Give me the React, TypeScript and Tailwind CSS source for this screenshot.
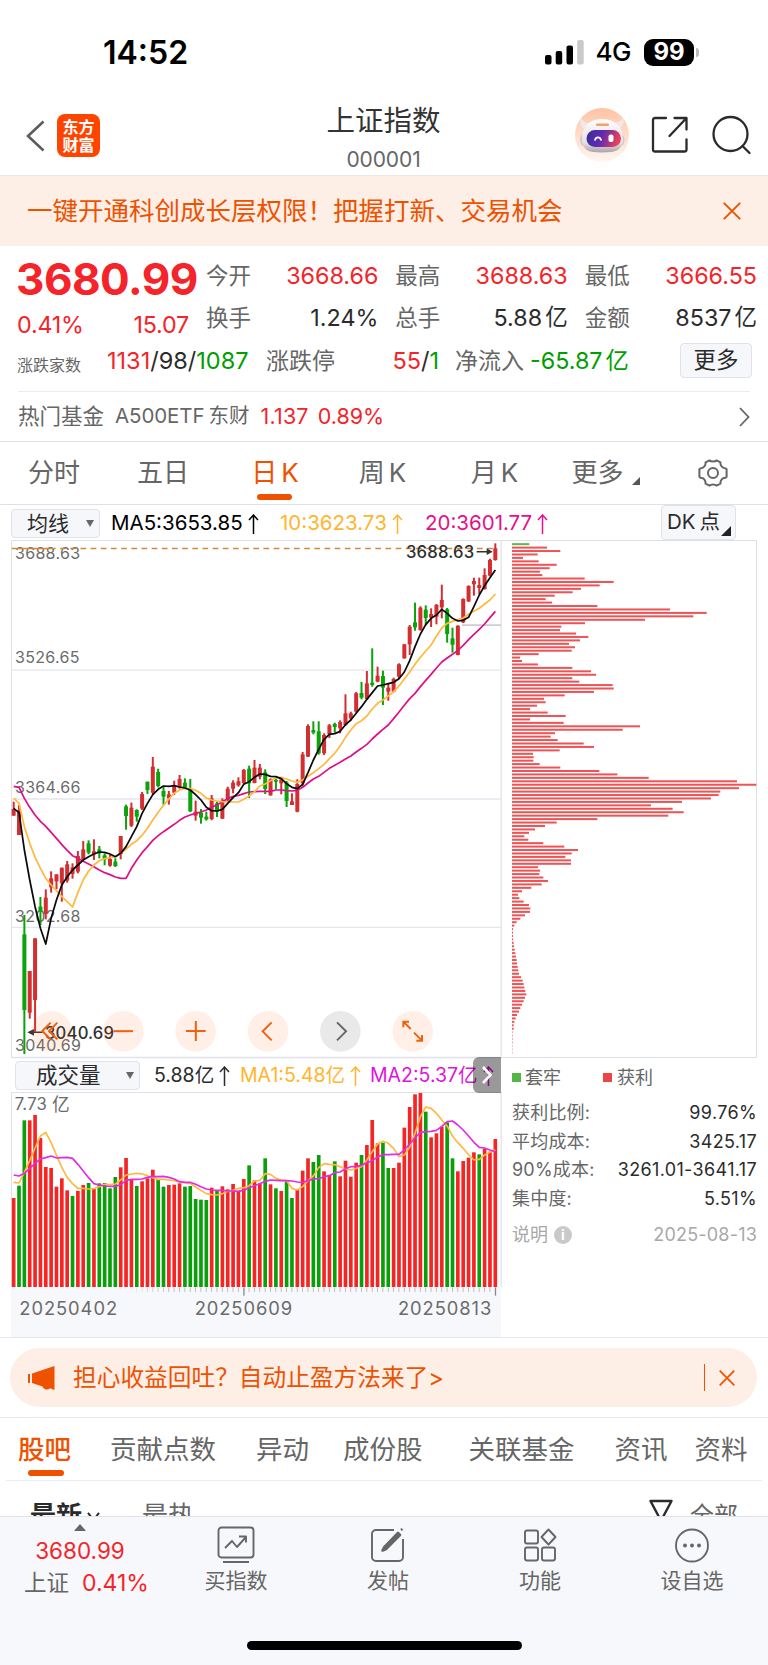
import React from "react";
import { clsx } from "clsx";

type Candle = [high: number, top: number, bottom: number, low: number];

// Chart drawings use a grid of 3 units per pixel
const STEP = 16.055;
const FIRST_X = 41;
const barX = (i: number) => FIRST_X + i * STEP;

const DOWN_CANDLES = new Set([2, 5, 14, 16, 17, 19, 21, 23, 25, 27, 28, 32, 33, 35, 36, 38, 44, 47, 49, 51, 56, 57, 60, 65, 67, 69, 75, 77, 81, 82]);
const DOWN_VOLUMES = new Set([1, 2, 11, 14, 16, 17, 18, 19, 23, 27, 28, 32, 33, 34, 35, 36, 38, 44, 47, 49, 51, 52, 56, 57, 60, 65, 69, 70, 77, 81, 82, 87]);

const CANDLES: Candle[] = [
    [905, 927, 947, 947], [915, 930, 1005, 1005], [1245, 1303, 1530, 1662], [1413, 1413, 1538, 1556], [1315, 1315, 1500, 1595],
    [1191, 1220, 1235, 1275], [1168, 1193, 1242, 1258], [1114, 1135, 1162, 1178], [1123, 1123, 1144, 1167], [1103, 1103, 1150, 1205],
    [1083, 1093, 1142, 1148], [1090, 1102, 1122, 1136], [1053, 1068, 1115, 1120], [1023, 1048, 1077, 1080], [1021, 1030, 1058, 1063],
    [1018, 1054, 1063, 1080], [1038, 1048, 1060, 1075], [1060, 1066, 1078, 1096], [1065, 1077, 1097, 1100], [1075, 1085, 1098, 1101],
    [1008, 1008, 1062, 1078], [914, 919, 948, 989], [908, 923, 977, 981], [928, 930, 950, 965], [876, 882, 926, 930],
    [845, 845, 870, 882], [771, 800, 878, 885], [806, 816, 858, 862], [860, 873, 890, 914], [873, 883, 895, 914],
    [842, 855, 878, 885], [825, 837, 862, 866], [835, 848, 863, 866], [837, 870, 934, 936], [902, 935, 947, 962],
    [927, 938, 953, 971], [935, 950, 958, 962], [885, 895, 957, 961], [905, 910, 935, 951], [895, 902, 956, 957],
    [860, 866, 900, 905], [841, 848, 866, 880], [832, 844, 856, 860], [807, 810, 849, 852], [797, 806, 850, 894],
    [780, 803, 849, 850], [792, 803, 830, 838], [808, 817, 867, 882], [835, 838, 886, 887], [835, 840, 845, 868],
    [833, 838, 850, 883], [843, 848, 903, 921], [880, 904, 915, 915], [838, 852, 935, 937], [756, 763, 850, 860],
    [673, 678, 770, 771], [664, 690, 698, 703], [664, 694, 760, 764], [700, 705, 760, 765], [672, 676, 703, 714],
    [668, 672, 681, 698], [661, 666, 685, 700], [583, 640, 675, 678], [635, 640, 655, 662], [576, 580, 635, 638],
    [546, 579, 593, 598], [513, 550, 597, 599], [445, 548, 555, 560], [500, 527, 545, 547], [512, 528, 563, 615],
    [550, 563, 575, 602], [533, 537, 575, 577], [490, 493, 530, 536], [432, 433, 475, 476], [375, 380, 433, 465],
    [308, 367, 382, 392], [319, 323, 390, 392], [316, 329, 354, 376], [325, 342, 353, 381], [312, 315, 350, 373],
    [254, 300, 322, 355], [324, 328, 402, 428], [383, 415, 434, 458], [376, 377, 465, 466], [295, 297, 367, 369],
    [256, 258, 304, 306], [233, 243, 253, 287], [233, 255, 264, 282], [205, 225, 267, 269], [176, 180, 227, 229],
    [130, 145, 180, 182],
];

const MA5 = [
    925, 938, 1050, 1140, 1220, 1285, 1332, 1255, 1200, 1155, 1130, 1110, 1095, 1080, 1070, 1062, 1056, 1057, 1062, 1070, 1060, 1040, 1010,
    980, 940, 910, 884, 868, 858, 859, 857, 861, 864, 870, 884, 900, 922, 932, 933, 928, 910, 893, 878, 853, 845, 832, 822, 823, 829, 830,
    836, 851, 862, 866, 853, 818, 780, 748, 718, 703, 701, 694, 674, 660, 640, 620, 598, 578, 558, 555, 551, 547, 536, 516, 482, 440, 402,
    374, 355, 345, 328, 340, 355, 363, 361, 352, 320, 285, 257, 233, 210,
];
const MA10 = [
    894, 910, 980, 1030, 1072, 1105, 1135, 1155, 1172, 1190, 1205, 1221, 1177, 1140, 1113, 1095, 1082, 1076, 1073, 1070, 1060, 1047, 1033,
    1022, 1006, 985, 960, 937, 916, 897, 880, 870, 865, 866, 871, 880, 894, 900, 903, 905, 906, 906, 906, 898, 888, 875, 858, 852, 842, 834,
    832, 837, 843, 847, 840, 829, 818, 806, 793, 776, 760, 738, 712, 690, 671, 662, 648, 627, 610, 600, 588, 575, 558, 537, 516, 493, 472,
    453, 435, 408, 384, 370, 364, 359, 354, 343, 334, 325, 312, 300, 282,
];
const MA20 = [
    859, 862, 895, 922, 945, 964, 979, 997, 1015, 1034, 1051, 1067, 1075, 1084, 1092, 1100, 1110, 1118, 1124, 1131, 1135, 1135, 1105, 1080,
    1058, 1040, 1021, 1007, 995, 984, 973, 961, 951, 945, 940, 936, 930, 922, 914, 905, 896, 889, 886, 881, 876, 875, 874, 874, 874, 870,
    870, 872, 873, 871, 862, 849, 837, 829, 817, 805, 796, 787, 777, 768, 756, 745, 733, 717, 702, 688, 675, 656, 636, 616, 596, 580, 560,
    541, 523, 504, 486, 474, 463, 451, 436, 419, 403, 388, 372, 353, 334,
];

const VOLUMES = [
    564, 527, 331, 331, 315, 384, 471, 474, 530, 505, 541, 558, 543, 525, 519, 534, 520, 519, 535, 501, 472, 444, 508, 528, 514, 505, 479,
    510, 530, 525, 524, 520, 530, 528, 567, 569, 570, 533, 541, 529, 538, 522, 542, 507, 466, 511, 520, 445, 523, 535, 543, 514, 564, 540,
    482, 445, 456, 435, 484, 497, 454, 499, 452, 500, 458, 435, 405, 330, 400, 398, 474, 474, 458, 353, 291, 253, 249, 305, 382, 370, 350,
    337, 445, 484, 453, 443, 427, 433, 416, 425, 387,
];
const VOL_MA1 = [
    517, 519, 487, 452, 414, 378, 367, 398, 435, 472, 503, 521, 535, 535, 537, 536, 530, 523, 524, 522, 510, 495, 492, 490, 492, 497, 503,
    508, 508, 510, 512, 516, 518, 520, 531, 541, 551, 554, 555, 551, 544, 541, 535, 533, 527, 513, 511, 491, 493, 505, 510, 512, 535, 540,
    530, 512, 498, 473, 461, 463, 464, 470, 477, 480, 475, 470, 450, 425, 402, 394, 400, 415, 440, 435, 411, 370, 320, 291, 295, 310, 330,
    348, 378, 398, 415, 434, 450, 448, 435, 427, 420,
];
const VOL_MA2 = [
    495, 498, 490, 475, 460, 447, 443, 438, 444, 443, 442, 445, 463, 483, 503, 521, 525, 528, 529, 529, 524, 511, 508, 508, 507, 502, 499,
    500, 499, 502, 507, 515, 517, 517, 523, 530, 537, 540, 541, 541, 543, 543, 544, 541, 533, 527, 521, 514, 510, 511, 512, 512, 513, 516,
    517, 512, 507, 506, 500, 497, 488, 486, 476, 470, 470, 466, 458, 452, 441, 434, 434, 433, 433, 420, 402, 383, 368, 365, 364, 361, 349,
    335, 333, 345, 360, 378, 397, 412, 414, 420, 425,
];

// Right edge of each cost-distribution bar, top to bottom
const CHIPS = [
    88, 141, 181, 113, 69, 116, 170, 149, 120, 127, 254, 341, 299, 243, 218, 164, 137, 156, 292, 510, 620, 580, 435, 255, 184, 180, 228, 265,
    240, 207, 225, 215, 116, 60, 66, 114, 217, 273, 288, 217, 238, 338, 341, 282, 194, 132, 137, 111, 90, 143, 197, 90, 191, 420, 368, 165,
    152, 173, 251, 282, 179, 99, 101, 100, 119, 181, 298, 352, 446, 711, 769, 717, 661, 656, 633, 546, 453, 518, 551, 505, 292, 170, 135,
    105, 87, 73, 85, 130, 193, 234, 215, 196, 213, 213, 114, 120, 118, 130, 144, 125, 94, 66, 54, 58, 71, 87, 91, 90, 75, 61, 50, 43, 39, 39,
    39, 39, 41, 42, 44, 46, 48, 50, 51, 53, 55, 57, 63, 68, 71, 73, 76, 79, 75, 71, 66, 61, 57, 51, 47, 43, 41, 41, 39, 39, 39, 39, 38, 38, 38,
];

const toPoints = (ys: number[]) => ys.map((y, i) => `${barX(i).toFixed(1)},${y}`).join(" ");

const StatusBar = () => (
    <div className="flex h-[100px] items-center justify-between pl-[103px] pr-[69px] pt-[5px] text-black">
        <span className="text-[32px] leading-none font-semibold">14:52</span>
        <div className="flex items-center pb-[1px]">
            <svg width="39" height="25" viewBox="0 0 39 25">
                <rect x="0" y="15" width="6.5" height="9.5" rx="2" />
                <rect x="10.7" y="11" width="6.5" height="13.5" rx="2" />
                <rect x="21.5" y="5.5" width="6.5" height="19" rx="2" />
                <rect x="32.2" y="0" width="6.5" height="24.5" rx="2" fill="#c9c9c9" />
            </svg>
            <span className="ml-[12px] text-[26px] leading-none font-medium tracking-[-0.5px]">4G</span>
            <div className="ml-[13px] flex h-[27px] w-[50px] items-center justify-center rounded-[9px] bg-black text-[24px] leading-none font-bold text-white">99</div>
            <div className="ml-[2px] h-[9px] w-[3px] rounded-r-full bg-[#bbb]" />
        </div>
    </div>
);

const Robot = () => (
    <svg width="54" height="54" viewBox="0 0 54 54">
        <defs>
            <linearGradient id="halo" x1="0" y1="0" x2="0" y2="1">
                <stop offset="0" stopColor="#ffc3a4" />
                <stop offset="1" stopColor="#fff6f1" />
            </linearGradient>
            <linearGradient id="shell" x1="0" y1="0" x2="0" y2="1">
                <stop offset="0" stopColor="#fdfcfc" />
                <stop offset="0.7" stopColor="#e6e2e3" />
                <stop offset="1" stopColor="#aaa4ab" />
            </linearGradient>
            <linearGradient id="visor" x1="0" y1="0" x2="1" y2="0.2">
                <stop offset="0" stopColor="#3a2c98" />
                <stop offset="0.5" stopColor="#5f2bb0" />
                <stop offset="1" stopColor="#e8405a" />
            </linearGradient>
        </defs>
        <circle cx="27" cy="27" r="27" fill="url(#halo)" />
        <path d="M6 10c-2 5 0 9 4 11l6-6c-5 0-8.500-1-10-5zM48 9.500c2 5 0 9-4 11l-6-6c5 0 8.500-1 10-5z" fill="#efe9e9" />
        <ellipse cx="8.500" cy="32" rx="3.500" ry="6" fill="#cfc9cd" />
        <ellipse cx="46" cy="32" rx="3.500" ry="6" fill="#cfc9cd" />
        <path d="M27 11c14 0 21 9 21 20s-7 13.500-21 13.500S7 42 7 31s6-20 20-20z" fill="url(#shell)" />
        <rect x="21" y="15.500" width="13" height="2.500" rx="1.200" fill="#eda36c" />
        <rect x="11.500" y="22" width="34.500" height="17" rx="8.500" fill="url(#visor)" />
        <path d="M20 32c1-3.500 5-3.500 6 0" fill="none" stroke="#fff" strokeWidth="1.700" strokeLinecap="round" />
        <rect x="33.500" y="26.500" width="5" height="7.500" rx="2" fill="#fff" />
    </svg>
);

const Header = () => (
    <div className="flex h-[76px] items-center border-b border-[#e8eaee] pl-[26px]">
        <div className="flex w-[300px] items-center pb-1">
            <svg width="19" height="32" viewBox="0 0 19 32" fill="none" stroke="#5c5c5c" strokeWidth="2.600">
                <path d="M17.500 1.500 2 16l15.500 14.500" />
            </svg>
            <div className="ml-[12px] flex h-[43px] w-[43px] flex-col items-center justify-center rounded-[8px] bg-[#ff4400] text-[16px] leading-[18px] font-bold text-white">
                <span>东方</span>
                <span>财富</span>
            </div>
        </div>
        <div className="flex w-[115px] flex-col items-center">
            <h1 className="text-[28.500px] leading-[40px] whitespace-nowrap text-[#333]">上证指数</h1>
            <span className="pt-[4px] text-[21px] leading-[30px] tracking-[-0.1px] text-[#666]">000001</span>
        </div>
        <div className="flex items-center pb-[6px] pl-[134px]">
            <Robot />
            <svg className="ml-[22px]" width="38" height="38" viewBox="0 0 38 38" fill="none" stroke="#2b2b2b" strokeWidth="2.300" strokeLinecap="round" strokeLinejoin="round">
                <path d="M15 2H4a2 2 0 0 0-2 2v29.500a2 2 0 0 0 2 2h29.500a2 2 0 0 0 2-2V23.500M23.500 2h12v11.500M35 2.500 18.500 20" />
            </svg>
            <svg className="ml-[23px]" width="40" height="40" viewBox="0 0 40 40" fill="none" stroke="#2b2b2b" strokeWidth="2.300" strokeLinecap="round">
                <circle cx="18.500" cy="19" r="17" />
                <path d="m30.500 31 7 7" />
            </svg>
        </div>
    </div>
);

const CloseIcon = ({ size }: { size: number }) => (
    <svg width={size} height={size} viewBox="0 0 18 18" fill="none" stroke="#ee5200" strokeWidth="1.900">
        <path d="m.8.8 16.400 16.400M17.200.8.8 17.200" />
    </svg>
);

const QuoteCell = ({ label, value, unit, up }: { label: string; value: string; unit?: string; up?: boolean }) => (
    <div className="flex h-[42px] items-center justify-between whitespace-nowrap">
        <span className="text-[#666]">{label}</span>
        <span className={clsx("flex gap-[3px] text-[23.300px]", up ? "text-[#f5232a]" : "text-[#2b2b2b]")}>
            {value}
            {unit && <span className="text-[22.500px]">{unit}</span>}
        </span>
    </div>
);

const Quote = () => (
    <section className="h-[195px] text-[22.500px] leading-none">
        <div className="flex h-[93px] pl-[17px] pr-[11px]">
            <div className="w-[189px] text-[#f5232a]">
                <div className="-ml-[1px] flex h-[66px] items-center text-[44px] font-bold tracking-[-0.500px]">3680.99</div>
                <div className="flex h-[26px] w-[172px] items-center justify-between text-[23.300px] tracking-[-0.2px]">
                    <span>0.41%</span>
                    <span>15.07</span>
                </div>
            </div>
            <div className="grid flex-1 grid-cols-3 content-start gap-x-[17px] pt-[9px]">
                <QuoteCell label="今开" value="3668.66" up />
                <QuoteCell label="最高" value="3688.63" up />
                <QuoteCell label="最低" value="3666.55" up />
                <QuoteCell label="换手" value="1.24%" />
                <QuoteCell label="总手" value="5.88" unit="亿" />
                <QuoteCell label="金额" value="8537" unit="亿" />
            </div>
        </div>
        <div className="flex h-[44px] items-center pl-[17px] text-[23.500px] whitespace-nowrap text-[#2b2b2b]">
            <span className="w-[90px] pt-[8px] text-[16px] text-[#666]">涨跌家数</span>
            <span className="w-[159px]"><b className="font-normal text-[#f5232a]">1131</b>/98/<b className="font-normal text-[#009e00]">1087</b></span>
            <span className="w-[70px] text-[23px] text-[#666]">涨跌停</span>
            <span className="w-[103px] text-right"><b className="font-normal text-[#f5232a]">55</b>/<b className="font-normal text-[#009e00]">1</b></span>
            <span className="ml-[16px] w-[75px] text-[23px] text-[#666]">净流入</span>
            <span className="flex w-[150px] gap-[3px] text-[23.300px] text-[#009e00]">-65.87<span>亿</span></span>
            <button className="-mt-[2px] h-[35px] w-[72px] rounded-[4px] border border-[#dfe2e8] bg-[#f6f7fa] text-[22.500px]">更多</button>
        </div>
        <div className="mx-[18px] mt-[8px] border-t border-[#ececf0]" />
        <div className="flex h-[49px] items-center pr-[18px] pl-[18px] text-[21.500px] text-[#666]">
            <span>热门基金</span>
            <span className="ml-[11px] text-[20.500px] tracking-[-0.1px]">A500ETF</span>
            <span className="ml-[4px] text-[20.500px]">东财</span>
            <span className="ml-[11px] text-[21.500px] tracking-[0.2px] text-[#f5232a]">1.137</span>
            <span className="ml-[9px] text-[21.500px] text-[#f5232a]">0.89%</span>
            <svg className="ml-auto" width="11" height="20" viewBox="0 0 11 20" fill="none" stroke="#666" strokeWidth="1.800">
                <path d="m1 1 8.500 9L1 19" />
            </svg>
        </div>
    </section>
);

const PeriodTabs = () => (
    <nav className="grid h-[64px] grid-cols-[108px_110px_114px_101px_123px_83px_129px] border-y border-[#dfe1e7] pb-[1px] text-[26px] leading-none text-[#666]">
        <span className="flex items-center justify-center">分时</span>
        <span className="flex items-center justify-center">五日</span>
        <span className="relative flex items-center justify-center gap-[4px] text-[#ee5200]">
            日<span>K</span>
            <i className="absolute bottom-[3px] left-[39px] h-[6px] w-[35px] rounded-full bg-[#ee5200]" />
        </span>
        <span className="flex items-center justify-center gap-[4px]">周<span>K</span></span>
        <span className="flex items-center justify-center gap-[4px]">月<span>K</span></span>
        <span className="relative flex items-center justify-center">
            更多
            <i className="absolute -right-[1px] bottom-[18px] border-b-[8px] border-l-[8px] border-b-[#555] border-l-transparent" />
        </span>
        <span className="flex items-center pl-[59px]">
            <svg width="30" height="30" viewBox="0 0 30 30" fill="none" stroke="#666" strokeWidth="2" strokeLinejoin="round">
                <path d="M11.500 2.300c1.200 1.600 5.800 1.600 7 0l4 2c-.6 2.200 1.200 5.300 3.500 5.600q1.600 0 2.600 1.300v7.600q-1 1.300-2.600 1.300c-2.300.3-4.100 3.400-3.500 5.600l-4 2c-1.200-1.600-5.800-1.600-7 0l-4-2c.6-2.200-1.200-5.300-3.500-5.600q-1.600 0-2.600-1.300v-7.600q1-1.300 2.600-1.300c2.300-.3 4.100-3.400 3.500-5.600z" />
                <circle cx="15" cy="15" r="5" />
            </svg>
        </span>
    </nav>
);

const UpArrow = () => (
    <svg className="mx-[5px] inline-block shrink-0" width="11" height="20" viewBox="0 0 11 20" fill="none" stroke="currentColor" strokeWidth="1.500">
        <path d="M5.500 20V1M1 6l4.500-5L10 6" />
    </svg>
);

const MovingAverageBar = () => (
    <div className="flex h-[35px] items-center pl-[11px] text-[20.500px] leading-none whitespace-nowrap">
        <button className="mt-[1px] flex h-[29px] w-[89px] items-center justify-between rounded-[4px] border border-[#dfe2e8] bg-[#f6f7fa] pr-[5px] pl-[15px] text-[21px] text-[#2b2b2b]">
            均线
            <i className="border-x-[4px] border-t-[7px] border-x-transparent border-t-[#666]" />
        </button>
        <span className="ml-[11px] flex w-[169px] items-center pt-[2px] text-black">MA5:3653.85<UpArrow /></span>
        <span className="flex w-[145px] items-center pt-[2px] text-[#ffb52e]">10:3623.73<UpArrow /></span>
        <span className="flex w-[236px] items-center pt-[2px] text-[#e5108a]">20:3601.77<UpArrow /></span>
        <button className="relative flex h-[35px] w-[75px] items-center gap-[4px] rounded-[4px] border border-[#dfe2e8] bg-[#f6f7fa] pl-[5px] text-[#2b2b2b]">
            DK<span>点</span>
            <i className="absolute right-[4px] bottom-[3px] border-b-[10px] border-l-[10px] border-b-[#222] border-l-transparent" />
        </button>
    </div>
);

const CIRCLES = [
    { cx: 155, icon: "M152 1568l-25 25 25 25M172 1568l-25 25 25 25" },
    { cx: 370, icon: "M340 1593.500h59" },
    { cx: 587, icon: "M558 1593h59M587.500 1563v60" },
    { cx: 804, icon: "M815 1567l-27 27 27 27" },
    { cx: 1021, icon: "M1011 1567l27 27-27 27" },
    { cx: 1238, icon: "M1210 1582v-17h17M1210 1565l22 22M1266 1605v17h-17M1266 1622l-24-24" },
];

const PriceChart = () => (
    <svg className="block shrink-0" width="491" height="519" viewBox="33 120 1473 1557" fontFamily="Inter, sans-serif">
        <path d="M34.500 1674V121.500H1503" fill="none" stroke="#dfe1e8" strokeWidth="3" />
        <path d="M33 1672.500H1503M1503.500 120V1674" stroke="#e2e3ea" strokeWidth="4" />
        <path d="M35 510.500H1503M35 897H1503M35 1282H1503" stroke="#e4e6ee" strokeWidth="4" />
        <path d="M1386 375.500H1503" stroke="#cccdd6" strokeWidth="5" />
        <g fill="#6b6b6b" fontSize="48" letterSpacing="0.9">
            <text x="45" y="178">3688.63</text>
            <text x="45" y="490">3526.65</text>
            <text x="45" y="879">3364.66</text>
            <text x="45" y="1266">3202.68</text>
            <text x="45" y="1653">3040.69</text>
        </g>
        <path d="M35 145.500H150" stroke="#d08a3f" strokeWidth="4" />
        <path d="M150 145.500H1490" stroke="#d08a3f" strokeWidth="4" strokeDasharray="17 13.500" />
        {CANDLES.map(([high, top, bottom, low], i) => (
            <g key={i} fill={DOWN_CANDLES.has(i) ? "#0aa30a" : "#d32f33"}>
                <rect x={barX(i) - 3} y={high} width="6" height={low - high} />
                <rect x={barX(i) - 6} y={top} width="12" height={Math.max(bottom - top, 4)} />
            </g>
        ))}
        <g fill="none" strokeWidth="5.200" strokeLinejoin="round">
            <polyline points={toPoints(MA20)} stroke="#dd1187" />
            <polyline points={toPoints(MA10)} stroke="#ffb93d" />
            <polyline points={toPoints(MA5)} stroke="#0b0b0b" />
        </g>
        <g fill="#2f2f2f" fontSize="50" fontWeight="500" letterSpacing="0.5">
            <text x="1218" y="173">3688.63</text>
            <text x="135" y="1617">3040.69</text>
        </g>
        <path d="M1430 155H1466M100 1597H128" stroke="#333" strokeWidth="4.500" />
        <path d="M1478 155l-18-10v20zM82 1597l20-10v20z" fill="#333" />
        {CIRCLES.map(({ cx, icon }) => (
            <g key={cx}>
                <circle cx={cx} cy="1594" r="61" fill={cx === 1021 ? "#000" : "#ff7126"} fillOpacity={cx === 1021 ? 0.085 : 0.11} />
                <path d={icon} fill="none" stroke={cx === 1021 ? "#666" : "#f0610f"} strokeWidth="6" />
            </g>
        ))}
    </svg>
);

const ChipChart = () => (
    <svg className="block shrink-0" width="266" height="519" viewBox="6 120 798 1557">
        <path d="M0 121.500H769.500V1672.500H0" fill="none" stroke="#dcdee8" strokeWidth="3" />
        {CHIPS.map((right, i) => (
            <rect key={i} x="36" y={129.500 + i * 10.310} width={right - 36} height="6" fill={i === 0 ? "#5cba4e" : "#ee5355"} opacity={i > 141 ? 0.5 : 1} />
        ))}
    </svg>
);

const VolumeBar = () => (
    <div className="relative flex h-[34px] items-center pt-[1px] pl-[4px] text-[19.500px] leading-none whitespace-nowrap">
        <button className="flex h-[29px] w-[125px] items-center justify-between rounded-[4px] border border-[#dfe2e8] bg-[#f6f7fa] pr-[5px] pl-[20px] text-[21.500px] text-[#2b2b2b]">
            成交量
            <i className="border-x-[4px] border-t-[7px] border-x-transparent border-t-[#666]" />
        </button>
        <span className="ml-[14px] flex w-[86px] items-center text-[#2b2b2b]">5.88亿<UpArrow /></span>
        <span className="flex w-[130px] items-center text-[#ffb52e]">MA1:5.48亿<UpArrow /></span>
        <span className="flex items-center text-[#e012e0]">MA2:5.37亿<UpArrow /></span>
        <div className="absolute -top-[1px] right-0 flex h-[36px] w-[28px] items-center justify-center rounded-l-[6px] bg-black/40">
            <svg width="10" height="18" viewBox="0 0 10 18" fill="none" stroke="#fff" strokeWidth="2.600">
                <path d="m1 1 7.500 8L1 17" />
            </svg>
        </div>
    </div>
);

const VolumeChart = () => (
    <svg className="block" width="491" height="245" viewBox="33 246 1473 735" fontFamily="Inter, 'Noto Sans CJK SC', sans-serif">
        <rect x="33" y="830" width="1470" height="151" fill="#f7f8fb" />
        <path d="M34.500 830V247.500H1503" fill="none" stroke="#dfe1e8" strokeWidth="3" />
        <path d="M1503.500 246V830" stroke="#e2e3ea" strokeWidth="4" />
        <g fill="#6b6b6b">
            <text x="44" y="300" fontSize="50" letterSpacing="0.9">7.73</text>
            <text x="156" y="302" fontSize="53">亿</text>
        </g>
        {VOLUMES.map((y, i) => (
            <rect key={i} x={barX(i) - 5.500} y={y} width="11" height={831 - y} fill={DOWN_VOLUMES.has(i) ? "#0a9f0a" : "#f42525"} />
        ))}
        <g fill="none" strokeWidth="5" strokeLinejoin="round">
            <polyline points={toPoints(VOL_MA1)} stroke="#ffb93d" />
            <polyline points={toPoints(VOL_MA2)} stroke="#e22be2" />
        </g>
        {VOLUMES.map((_, i) => {
            const major = i === 43 || i === 90;
            return i < 22 ? null : (
                <rect key={i} x={barX(i) - 1.500} y="832" width={major ? 4 : 2.500} height={major ? 25 : 14} fill={major ? "#8a8a8a" : "#b5b5b8"} opacity={Math.min(1, (i - 21) / 8)} />
            );
        })}
        <g fill="#6b6b6b" fontSize="55" letterSpacing="2.800">
            <text x="58" y="915">20250402</text>
            <text x="584" y="915">20250609</text>
            <text x="1194" y="915">20250813</text>
        </g>
    </svg>
);

const STATS = [
    { label: "获利比例:", value: "99.76%" },
    { label: "平均成本:", value: "3425.17" },
    { label: "90%成本:", value: "3261.01-3641.17" },
    { label: "集中度:", value: "5.51%" },
];

const ChipStats = () => (
    <div className="w-[256px] pl-[11px] text-[18px] leading-none text-[#666]">
        <div className="flex h-[39px] items-center">
            <i className="h-[9px] w-[9px] bg-[#53b646]" />
            <span className="ml-[4px]">套牢</span>
            <i className="ml-[42px] h-[9px] w-[9px] bg-[#ea4547]" />
            <span className="ml-[5px]">获利</span>
        </div>
        <div className="pt-[2px]">
            {STATS.map(({ label, value }) => (
                <div key={label} className="flex h-[28.500px] items-center justify-between whitespace-nowrap">
                    <span className="tracking-[0.2px]">{label}</span>
                    <span className="tracking-[0.350px] text-[#2b2b2b]">{value}</span>
                </div>
            ))}
        </div>
        <div className="flex h-[44px] items-center text-[#a8a8a8]">
            <span>说明</span>
            <i className="ml-[6px] flex h-[18px] w-[18px] items-center justify-center rounded-full bg-[#c9c9c9] text-[14px] font-bold text-white not-italic">i</i>
            <span className="ml-auto tracking-[0.2px]">2025-08-13</span>
        </div>
    </div>
);

const Promo = () => (
    <div className="flex h-[81px] items-center border-y border-[#e6e7eb] pr-[11px] pl-[10px]">
        <div className="flex h-[59px] w-full items-center rounded-full bg-[#fdeee6] pr-[22px] pl-[18px] text-[#ee5200]">
            <svg width="27" height="24" viewBox="0 0 27 24" fill="#ee5200">
                <path d="M0 8h2v9H0zM4 7.500 26.500 0v24L22 22.300c-2 2-6 1.800-7.500-1.800L4 17z" />
            </svg>
            <span className="ml-[18px] text-[23.700px] leading-none">担心收益回吐？自动止盈方法来了&gt;</span>
            <i className="ml-auto h-[27px] w-[1.500px] bg-[#ee5200]" />
            <span className="ml-[14px]"><CloseIcon size={16} /></span>
        </div>
    </div>
);

const SubTabs = () => (
    <nav className="relative mx-[6px] flex h-[63px] items-center border-b border-[#ececf0] pl-[12px] text-[26.500px] leading-none whitespace-nowrap text-[#666]">
        <span className="font-medium text-[#ee5200]">股吧</span>
        <span className="ml-[39px]">贡献点数</span>
        <span className="ml-[40px]">异动</span>
        <span className="ml-[34px]">成份股</span>
        <span className="ml-[46px]">关联基金</span>
        <span className="ml-[40px]">资讯</span>
        <span className="ml-[27px]">资料</span>
        <i className="absolute bottom-[4px] left-[22px] h-[6px] w-[36px] rounded-full bg-[#ee5200]" />
    </nav>
);

const PostFilter = () => (
    <div className="flex h-[35px] items-start overflow-hidden pt-[21px] pl-[30px] text-[26px] leading-[28px] text-[#666]">
        <span className="font-bold text-[#2b2b2b]">最新</span>
        <svg className="mt-[9px] ml-[5px]" width="13" height="11" viewBox="0 0 14 12" fill="none" stroke="#2b2b2b" strokeWidth="2.200">
            <path d="m1 2 6 8 6-8" />
        </svg>
        <span className="ml-[42px]">最热</span>
        <svg className="-mt-[3px] ml-auto" width="24" height="26" viewBox="0 0 24 26" fill="none" stroke="#2b2b2b" strokeWidth="2.400" strokeLinejoin="round">
            <path d="M1.500 2h21L14.500 17v8h-5v-8z" />
        </svg>
        <span className="mr-[30px] ml-[17px] text-[24px]">全部</span>
    </div>
);

const NavItem = ({ label, children }: { label: string; children: React.ReactNode }) => (
    <div className="flex flex-col items-center pt-[9px]">
        <svg width="38" height="38" viewBox="0 0 38 38" fill="none" stroke="#666" strokeWidth="1.900" strokeLinejoin="round">
            {children}
        </svg>
        <span className="mt-[6px] text-[21px] leading-[22px] text-[#666]">{label}</span>
    </div>
);

const BottomNav = () => (
    <footer className="h-[149px] border-t border-[#e0e2e6] bg-[#f7f8fb]">
        <div className="grid h-[124px] grid-cols-[160px_152px_152px_152px_152px]">
            <div className="flex flex-col items-center pt-[7px] leading-none text-[#f5232a]">
                <i className="border-x-[6px] border-b-[7px] border-x-transparent border-b-[#666]" />
                <span className="mt-[9px] text-[22.500px]">3680.99</span>
                <div className="mt-[9px] flex items-center pl-[13px] text-[23px]">
                    <span className="text-[22.500px] text-[#666]">上证</span>
                    <span className="ml-[13px]">0.41%</span>
                </div>
            </div>
            <NavItem label="买指数">
                <rect x="1.500" y="1.500" width="35" height="30" rx="3" />
                <path d="M6 36h26M8 22l7-7 5 6 9-10M22 10.500h7v6" />
            </NavItem>
            <NavItem label="发帖">
                <path d="M25 4H7a4 4 0 0 0-4 4v23a4 4 0 0 0 4 4h23a4 4 0 0 0 4-4V13" />
                <path d="m15 21.500 14-14.500 2 2-14 14-3.500 1.500zM32 4l1.500-1" fill="#666" strokeWidth="2.600" />
            </NavItem>
            <NavItem label="功能">
                <rect x="4" y="4.500" width="13" height="13" rx="2" />
                <rect x="4" y="21.500" width="13" height="13" rx="2" />
                <rect x="21" y="21.500" width="13" height="13" rx="2" />
                <path d="m27.500 3.500 7 7.500-7 7.500-7-7.500z" />
            </NavItem>
            <NavItem label="设自选">
                <circle cx="19" cy="19.500" r="16" />
                <g fill="#666" stroke="none">
                    <circle cx="12" cy="19.500" r="2" />
                    <circle cx="19" cy="19.500" r="2" />
                    <circle cx="26" cy="19.500" r="2" />
                </g>
            </NavItem>
        </div>
        <div className="mx-auto h-[9px] w-[275px] rounded-full bg-black" />
    </footer>
);

export default function App() {
    return (
        <div className="h-[1665px] w-[768px] overflow-hidden bg-white font-['Inter','Noto_Sans_CJK_SC',sans-serif]">
            <StatusBar />
            <Header />
            <div className="flex h-[70px] items-center justify-between bg-[#fdeee6] pr-[27px] pl-[27px] text-[25.500px] leading-none text-[#ee5200]">
                <span>一键开通科创成长层权限！把握打新、交易机会</span>
                <CloseIcon size={18} />
            </div>
            <Quote />
            <PeriodTabs />
            <MovingAverageBar />
            <div className="flex h-[518px] pl-[11px]">
                <PriceChart />
                <ChipChart />
            </div>
            <div className="flex h-[279px] pl-[11px]">
                <div className="w-[490px]">
                    <VolumeBar />
                    <VolumeChart />
                </div>
                <ChipStats />
            </div>
            <Promo />
            <SubTabs />
            <PostFilter />
            <BottomNav />
        </div>
    );
}
